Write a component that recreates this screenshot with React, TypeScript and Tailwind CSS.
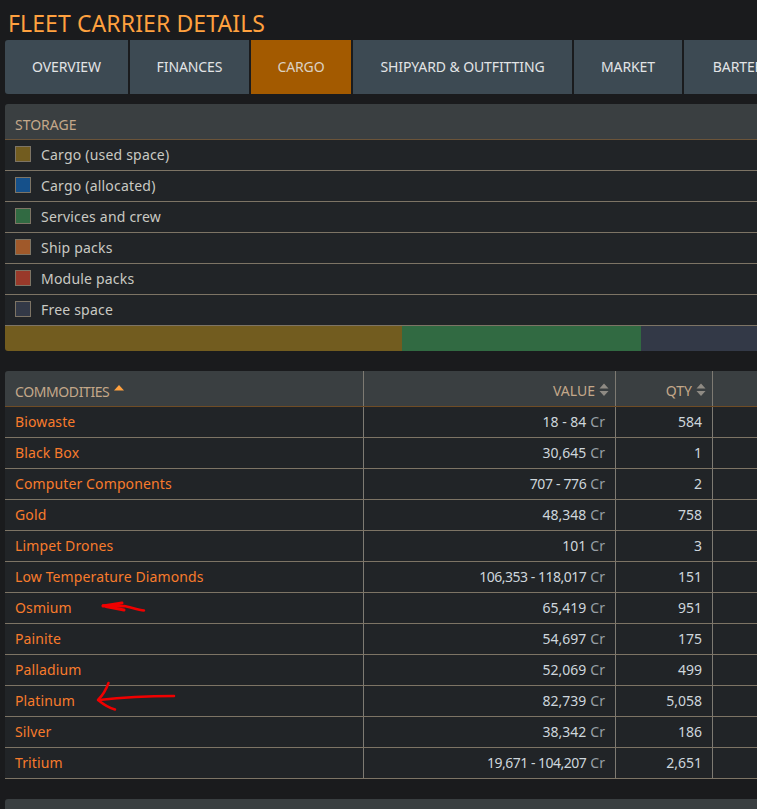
const tabs = [
  { name: "OVERVIEW", width: "w-[123px]" },
  { name: "FINANCES", width: "w-[119px]" },
  { name: "CARGO", width: "w-[100px]", active: true },
  { name: "SHIPYARD & OUTFITTING", width: "w-[219px]" },
  { name: "MARKET", width: "w-[108px]" },
  { name: "BARTER", width: "w-[108px]" },
];

const storage = [
  { name: "Cargo (used space)", color: "bg-[#725c1f]" },
  { name: "Cargo (allocated)", color: "bg-[#15508a]" },
  { name: "Services and crew", color: "bg-[#316a42]" },
  { name: "Ship packs", color: "bg-[#a0592a]" },
  { name: "Module packs", color: "bg-[#99392a]" },
  { name: "Free space", color: "bg-[#333947]" },
];

const commodities = [
  { name: "Biowaste", value: "18 - 84", qty: "584" },
  { name: "Black Box", value: "30,645", qty: "1" },
  { name: "Computer Components", value: "707 - 776", qty: "2", tight: "tracking-[-0.35px]" },
  { name: "Gold", value: "48,348", qty: "758" },
  { name: "Limpet Drones", value: "101", qty: "3" },
  { name: "Low Temperature Diamonds", value: "106,353 - 118,017", qty: "151", tight: "tracking-[-0.48px]" },
  { name: "Osmium", value: "65,419", qty: "951" },
  { name: "Painite", value: "54,697", qty: "175" },
  { name: "Palladium", value: "52,069", qty: "499" },
  { name: "Platinum", value: "82,739", qty: "5,058" },
  { name: "Silver", value: "38,342", qty: "186" },
  { name: "Tritium", value: "19,671 - 104,207", qty: "2,651", tight: "tracking-[-0.5px]" },
];

function SortIcon() {
  return (
    <svg width="10" height="14" viewBox="0 0 10 14" className="mb-[2px] ml-[4px] shrink-0">
      <path d="M5 0.5 L9.5 5.5 H0.5 Z M0.5 8 H9.5 L5 13 Z" fill="#8f8b84" />
    </svg>
  );
}

export default function App() {
  return (
    <div className="relative h-[809px] w-[757px] overflow-hidden bg-[#1a1b1d] pl-[5px] font-['Noto_Sans',sans-serif]">
      <h1 className="h-[40px] w-[900px] pl-[3px] pt-[7px] text-[23px] leading-[32px] tracking-[0.1px] text-[#ffa13f]">
        FLEET CARRIER DETAILS
      </h1>

      <div className="flex w-[900px] gap-[2px]">
        {tabs.map((tab) => (
          <div
            key={tab.name}
            className={`flex h-[54px] items-center justify-center pb-[2px] text-[14px] tracking-[-0.1px] ${tab.width} ${
              tab.active ? "bg-[#a35a00] text-[#dcd2c4]" : "bg-[#3d4a53] text-[#e2e4e6]"
            } ${tab.name === "OVERVIEW" ? "rounded-bl-[3px] rounded-tl-[3px]" : ""}`}
          >
            {tab.name}
          </div>
        ))}
      </div>

      <div className="mt-[10px] w-[900px]">
        <div className="flex h-[36px] items-center rounded-tl-[3px] border-b border-[#6b5439] bg-[#3a3f41] pl-[10px] pt-[6px] text-[14px] text-[#c4a88a]">
          STORAGE
        </div>
        {storage.map((item) => (
          <div
            key={item.name}
            className="flex h-[31px] items-center border-b border-[#7d7465] bg-[#212427] pb-[2px] pl-[10px] text-[14px] tracking-[0.2px] text-[#c9c9c3]"
          >
            <span className={`mr-[10px] h-[16px] w-[16px] border border-[#7d7465] ${item.color}`} />
            {item.name}
          </div>
        ))}
        <div className="flex h-[25px]">
          <div className="w-[397px] rounded-bl-[3px] bg-[#725c1f]" />
          <div className="w-[239px] bg-[#316a42]" />
          <div className="flex-1 bg-[#333947]" />
        </div>
      </div>

      <div className="mt-[20px] w-[900px]">
        <div className="grid h-[36px] grid-cols-[359px_252px_97px_1fr] rounded-tl-[3px] border-b border-[#6f4c25] bg-[#3a3f41] text-[14px] text-[#c4a88a]">
          <div className="flex items-center border-r border-[#7d7a72] pl-[10px] pt-[6px] tracking-[-0.4px]">
            COMMODITIES
            <svg width="10" height="6" viewBox="0 0 10 6" className="mb-[8px] ml-[5px]">
              <path d="M5 0 L10 5.5 H0 Z" fill="#ffa13f" />
            </svg>
          </div>
          <div className="flex items-center justify-end border-r border-[#7d7a72] pr-[6px] pt-[4px]">
            VALUE
            <SortIcon />
          </div>
          <div className="flex items-center justify-end border-r border-[#7d7a72] pr-[6px] pt-[4px]">
            QTY
            <SortIcon />
          </div>
          <div />
        </div>
        {commodities.map((row) => (
          <div
            key={row.name}
            className="grid h-[31px] grid-cols-[359px_252px_97px_1fr] border-b border-[#7d7465] bg-[#212427] text-[14px]"
          >
            <div className="flex items-center border-r border-[#7d7a72] pb-[2px] pl-[10px] tracking-[0.12px] text-[#f87b2c]">
              {row.name}
            </div>
            <div className="flex items-center justify-end border-r border-[#7d7a72] pb-[2px] pr-[10px] text-[#ced6dc]">
              <span className={row.tight}>{row.value}</span>
              <span className="ml-[4px] text-[#98a0a6]">Cr</span>
            </div>
            <div className="flex items-center justify-end border-r border-[#7d7a72] pb-[2px] pr-[10px] text-[#ced6dc]">
              {row.qty}
            </div>
            <div />
          </div>
        ))}
      </div>

      <div className="mt-[20px] h-[30px] w-[900px] rounded-tl-[3px] bg-[#3a3f41]" />

      {/* hand drawn arrows on top of the screenshot */}
      <svg width="757" height="809" className="pointer-events-none absolute left-0 top-0">
        <g fill="none" stroke="#f00000" strokeLinecap="round" strokeLinejoin="round">
          <path d="M103 605.5 C112 606 116 606.5 124 606 C130 607 138 610 144 610.5" strokeWidth="2.5" />
          <path d="M103 606 L122 603 M106 606.5 L124 610" strokeWidth="3" />
          <path d="M174 696 C150 696 125 697 99 700" strokeWidth="2.5" />
          <path d="M108.500 683 C106 690 102 696 98 700 C103 704 109 708 115 709.500" strokeWidth="2.5" />
        </g>
      </svg>
    </div>
  );
}
